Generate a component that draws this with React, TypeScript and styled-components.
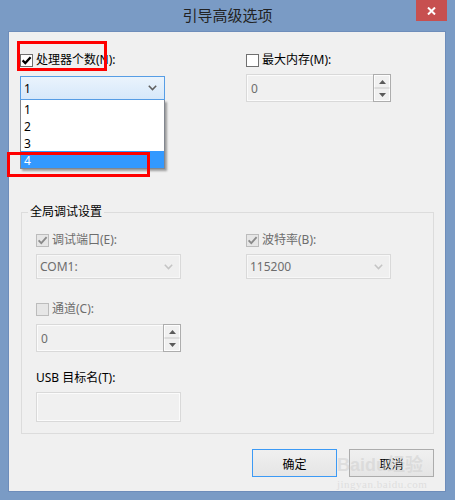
import React from 'react';
import styled, { createGlobalStyle } from 'styled-components';

const FONT = `"Noto Sans", "Noto Sans CJK SC", sans-serif`;

const GlobalStyle = createGlobalStyle`
  html, body { margin: 0; padding: 0; width: 455px; height: 500px; overflow: hidden; background: #7a9bc5; }
  #root { width: 455px; height: 500px; }
  * { box-sizing: border-box; }
`;

const Window = styled.div`
  position: relative;
  width: 455px;
  height: 500px;
  background: #7a9bc5;
  display: flex;
  flex-direction: column;
  font-family: ${FONT};
  font-size: 12px;
`;

const TitleBar = styled.div`
  height: 31px;
  flex: none;
  display: grid;
  grid-template-columns: 1fr auto 1fr;
  align-items: start;
`;

const Title = styled.div`
  grid-column: 2;
  font-size: 15px;
  line-height: 29px;
  color: #222;
  font-family: "Noto Sans CJK SC", sans-serif;
`;

const CloseBtn = styled.div`
  grid-column: 3;
  justify-self: end;
  margin-right: 8px;
  width: 31px;
  height: 21px;
  background: #c75050;
  display: flex;
  align-items: center;
  justify-content: center;
`;

const Client = styled.div`
  flex: 1;
  margin: 0 9px 8px 8px;
  background: #f0f0f0;
  border: 1px solid #6e8dba;
  display: flex;
  flex-direction: column;
`;

const TopSection = styled.div`
  display: grid;
  grid-template-columns: 145px 145px;
  column-gap: 81px;
  padding: 20px 0 0 11px;
  align-items: start;
`;

const Field = styled.div<{ $mt?: number }>`
  display: flex;
  flex-direction: column;
  margin-top: ${p => p.$mt ?? 0}px;
`;

const CheckRow = styled.label`
  display: flex;
  align-items: center;
  height: 16px;
`;

const Box = styled.span<{ $disabled?: boolean }>`
  width: 13px;
  height: 13px;
  flex: none;
  border: 1px solid ${p => (p.$disabled ? '#bcbcbc' : '#707070')};
  background: ${p => (p.$disabled ? '#e6e6e6' : '#fff')};
  display: flex;
  align-items: center;
  justify-content: center;
`;

const Label = styled.span<{ $disabled?: boolean; $gap?: number }>`
  margin-left: ${p => p.$gap ?? 3}px;
  font-size: 12px;
  line-height: 16px;
  color: ${p => (p.$disabled ? '#6d6d6d' : '#000')};
  white-space: nowrap;
`;

const ComboWrap = styled.div<{ $mt: number }>`
  position: relative;
  margin-top: ${p => p.$mt}px;
`;

const Combo = styled.div<{ $open?: boolean; $h: number }>`
  height: ${p => p.$h}px;
  border: 1px solid ${p => (p.$open ? '#569de5' : '#d9d9d9')};
  background: ${p => (p.$open ? 'linear-gradient(#eaf3fc, #d6e8fa)' : '#efefef')};
  box-shadow: ${p => (p.$open ? 'none' : 'inset 0 0 0 1px #f7f7f7')};
  display: flex;
  align-items: center;
  justify-content: space-between;
  padding: 0 7px 0 3px;
  color: ${p => (p.$open ? '#000' : '#6d6d6d')};
  font-size: 12px;
`;

const DropList = styled.div`
  position: absolute;
  top: 100%;
  left: 0;
  width: 145px;
  background: #fff;
  border: 1px solid #828790;
  border-top: none;
  box-shadow: 2px 2px 2px rgba(0, 0, 0, 0.35);
  z-index: 2;
`;

const DropItem = styled.div<{ $sel?: boolean }>`
  height: 17px;
  line-height: 19px;
  padding-left: 3px;
  font-size: 12px;
  background: ${p => (p.$sel ? '#3399ff' : '#fff')};
  color: ${p => (p.$sel ? '#fff' : '#000')};
`;

const Spin = styled.div<{ $mt: number }>`
  margin-top: ${p => p.$mt}px;
  height: 28px;
  border: 1px solid #d9d9d9;
  box-shadow: inset 0 0 0 1px #fbfbfb;
  background: #f0f0f0;
  display: flex;
`;

const SpinText = styled.div`
  flex: 1;
  display: flex;
  align-items: center;
  padding-left: 4px;
  color: #6d6d6d;
  font-size: 12px;
`;

const SpinButtons = styled.div`
  width: 18px;
  margin: -1px -1px -1px 0;
  border: 1px solid #adadad;
  display: flex;
  flex-direction: column;
  background: #f0f0f0;
`;

const SpinBtn = styled.div`
  flex: 1;
  display: flex;
  align-items: center;
  justify-content: center;
  border: 1px solid #fdfdfd;
  border-bottom-color: #dcdcdc;
  &:last-child { border-bottom-color: #fdfdfd; border-top-color: #dcdcdc; }
`;

const Group = styled.fieldset`
  margin: 102px 0 0 12px;
  width: 413px;
  padding: 0;
  border: 1px solid #dcdcdc;
  min-inline-size: 0;
`;

const Legend = styled.legend`
  margin-left: 6px;
  padding: 0 2px;
  font-size: 12px;
  line-height: 16px;
  color: #000;
`;

const GroupBody = styled.div`
  display: grid;
  grid-template-columns: 145px 145px;
  column-gap: 65px;
  padding: 12px 14px 11px;
  align-items: start;
`;

const TextBox = styled.div`
  margin-top: 6px;
  height: 30px;
  border: 1px solid #d9d9d9;
  box-shadow: inset 0 0 0 1px #fbfbfb;
  background: #f0f0f0;
`;

const ButtonRow = styled.div`
  display: flex;
  justify-content: flex-end;
  gap: 12px;
  margin-top: 15px;
  padding-right: 11px;
`;

const Button = styled.div<{ $default?: boolean }>`
  width: 85px;
  height: 28px;
  border: 1px solid ${p => (p.$default ? '#3c9af5' : '#acacac')};
  background: linear-gradient(#f0f0f0, #e5e5e5);
  display: flex;
  align-items: center;
  justify-content: center;
  font-size: 12px;
  color: #000;
  font-family: "Noto Sans CJK SC", sans-serif;
`;

const Mark = styled.div<{ $l: number; $t: number; $w: number; $h: number }>`
  position: absolute;
  left: ${p => p.$l}px;
  top: ${p => p.$t}px;
  width: ${p => p.$w}px;
  height: ${p => p.$h}px;
  border: 3px solid #ff0000;
  pointer-events: none;
  z-index: 5;
`;

const Watermark = styled.div`
  position: absolute;
  left: 337px;
  top: 455px;
  display: flex;
  flex-direction: column;
  align-items: flex-start;
  color: rgba(205, 205, 205, 0.5);
  pointer-events: none;
  z-index: 4;
`;

const WmMain = styled.div`
  font-family: "Liberation Sans", "Noto Sans CJK SC", sans-serif;
  font-size: 18px;
  font-weight: bold;
  line-height: 21px;
`;

const WmSub = styled.div`
  margin-top: 2px;
  font-family: "Liberation Serif", serif;
  font-size: 11px;
  line-height: 12px;
  letter-spacing: 0.5px;
`;

const Check: React.FC<{ checked?: boolean; disabled?: boolean }> = ({ checked, disabled }) => (
  <Box $disabled={disabled}>
    {checked && (
      <svg width="11" height="11" viewBox="0 0 11 11">
        <path
          d="M1.6 5.4 L4.3 8.1 L9.6 2.2"
          fill="none"
          stroke={disabled ? '#8a8a8a' : '#000'}
          strokeWidth={disabled ? 1.8 : 2.2}
        />
      </svg>
    )}
  </Box>
);

const Chevron: React.FC<{ color: string }> = ({ color }) => (
  <svg width="9" height="6" viewBox="0 0 9 6">
    <path d="M0.8 0.8 L4.5 4.6 L8.2 0.8" fill="none" stroke={color} strokeWidth="1.5" />
  </svg>
);

const Up = () => (
  <svg width="7" height="4" viewBox="0 0 7 4">
    <path d="M0 4 L3.5 0 L7 4 Z" fill="#5a5a5a" />
  </svg>
);
const Down = () => (
  <svg width="7" height="4" viewBox="0 0 7 4">
    <path d="M0 0 L3.5 4 L7 0 Z" fill="#5a5a5a" />
  </svg>
);

const SpinBox: React.FC<{ mt: number; value: string }> = ({ mt, value }) => (
  <Spin $mt={mt}>
    <SpinText>{value}</SpinText>
    <SpinButtons>
      <SpinBtn><Up /></SpinBtn>
      <SpinBtn><Down /></SpinBtn>
    </SpinButtons>
  </Spin>
);

export default function App() {
  return (
    <Window>
      <GlobalStyle />
      <TitleBar>
        <Title>引导高级选项</Title>
        <CloseBtn>
          <svg width="9" height="8" viewBox="0 0 9 8">
            <path d="M1 0.5 L8 7.5 M8 0.5 L1 7.5" stroke="#fff" strokeWidth="2" />
          </svg>
        </CloseBtn>
      </TitleBar>
      <Client>
        <TopSection>
          <Field>
            <CheckRow>
              <Check checked />
              <Label>处理器个数(N):</Label>
            </CheckRow>
            <ComboWrap $mt={8}>
              <Combo $open $h={24}>
                <span>1</span>
                <Chevron color="#5f5f5f" />
              </Combo>
              <DropList>
                <DropItem>1</DropItem>
                <DropItem>2</DropItem>
                <DropItem>3</DropItem>
                <DropItem $sel>4</DropItem>
              </DropList>
            </ComboWrap>
          </Field>
          <Field>
            <CheckRow>
              <Check />
              <Label>最大内存(M):</Label>
            </CheckRow>
            <SpinBox mt={6} value="0" />
          </Field>
        </TopSection>

        <Group>
          <Legend>全局调试设置</Legend>
          <GroupBody>
            <Field>
              <CheckRow>
                <Check checked disabled />
                <Label $disabled>调试端口(E):</Label>
              </CheckRow>
              <ComboWrap $mt={6}>
                <Combo $h={25}>
                  <span>COM1:</span>
                  <Chevron color="#c4c4c4" />
                </Combo>
              </ComboWrap>
            </Field>
            <Field>
              <CheckRow>
                <Check checked disabled />
                <Label $disabled>波特率(B):</Label>
              </CheckRow>
              <ComboWrap $mt={6}>
                <Combo $h={25}>
                  <span>115200</span>
                  <Chevron color="#c4c4c4" />
                </Combo>
              </ComboWrap>
            </Field>
            <Field $mt={22}>
              <CheckRow>
                <Check disabled />
                <Label $disabled>通道(C):</Label>
              </CheckRow>
              <SpinBox mt={7} value="0" />
            </Field>
            <div />
            <Field $mt={18}>
              <CheckRow>
                <Label $gap={0}>USB 目标名(T):</Label>
              </CheckRow>
              <TextBox />
            </Field>
          </GroupBody>
        </Group>

        <ButtonRow>
          <Button $default>确定</Button>
          <Button>取消</Button>
        </ButtonRow>
      </Client>

      <Mark $l={17} $t={41} $w={90} $h={30} />
      <Mark $l={7} $t={152} $w={143} $h={25} />

      <Watermark>
        <WmMain>Baidu经验</WmMain>
        <WmSub>jingyan.baidu.com</WmSub>
      </Watermark>
    </Window>
  );
}
